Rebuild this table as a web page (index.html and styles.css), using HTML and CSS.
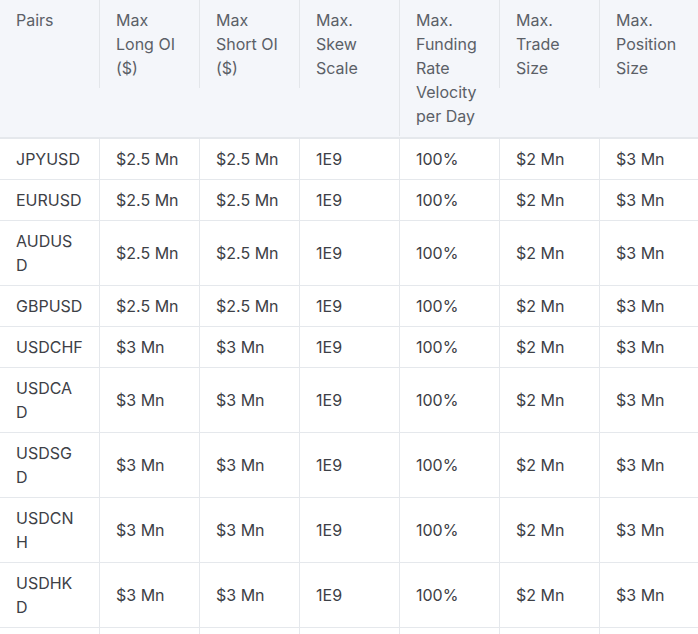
FILE: index.html
```html
<!DOCTYPE html>
<html>
<head>
<meta charset="utf-8">
<link rel="stylesheet" href="styles.css">
</head>
<body>
<div class="wrap">
<table class="tbl">
<thead>
<tr>
<th><div class="hc">Pairs</div></th>
<th><div class="hc">Max Long OI ($)</div></th>
<th><div class="hc">Max Short OI ($)</div></th>
<th><div class="hc">Max. Skew Scale</div></th>
<th><div class="hc">Max. Funding Rate Velocity per Day</div></th>
<th><div class="hc">Max. Trade Size</div></th>
<th><div class="hc">Max. Position Size</div></th>
</tr>
</thead>
<tbody>
<tr><td>JPYUSD</td><td>$2.5 Mn</td><td>$2.5 Mn</td><td>1E9</td><td>100%</td><td>$2 Mn</td><td>$3 Mn</td></tr>
<tr><td>EURUSD</td><td>$2.5 Mn</td><td>$2.5 Mn</td><td>1E9</td><td>100%</td><td>$2 Mn</td><td>$3 Mn</td></tr>
<tr><td>AUDUSD</td><td>$2.5 Mn</td><td>$2.5 Mn</td><td>1E9</td><td>100%</td><td>$2 Mn</td><td>$3 Mn</td></tr>
<tr><td>GBPUSD</td><td>$2.5 Mn</td><td>$2.5 Mn</td><td>1E9</td><td>100%</td><td>$2 Mn</td><td>$3 Mn</td></tr>
<tr><td>USDCHF</td><td>$3 Mn</td><td>$3 Mn</td><td>1E9</td><td>100%</td><td>$2 Mn</td><td>$3 Mn</td></tr>
<tr><td>USDCAD</td><td>$3 Mn</td><td>$3 Mn</td><td>1E9</td><td>100%</td><td>$2 Mn</td><td>$3 Mn</td></tr>
<tr><td>USDSGD</td><td>$3 Mn</td><td>$3 Mn</td><td>1E9</td><td>100%</td><td>$2 Mn</td><td>$3 Mn</td></tr>
<tr><td>USDCNH</td><td>$3 Mn</td><td>$3 Mn</td><td>1E9</td><td>100%</td><td>$2 Mn</td><td>$3 Mn</td></tr>
<tr><td>USDHKD</td><td>$3 Mn</td><td>$3 Mn</td><td>1E9</td><td>100%</td><td>$2 Mn</td><td>$3 Mn</td></tr>
<tr class="tail"><td></td><td></td><td></td><td></td><td></td><td></td><td></td></tr>
</tbody>
</table>
</div>
</body>
</html>
```
FILE: styles.css
```css
html, body {
  margin: 0;
  padding: 0;
  background: #ffffff;
}
.wrap {
  width: 698px;
  height: 634px;
  overflow: hidden;
}
.tbl {
  border-collapse: separate;
  border-spacing: 0;
  table-layout: fixed;
  width: 700px;
  font-family: Inter, "Noto Sans", sans-serif;
  font-size: 16px;
  line-height: 24px;
}
.tbl th {
  width: 100px;
  box-sizing: border-box;
  padding: 0 0 1px 0;
  vertical-align: top;
  text-align: left;
  font-weight: 400;
  color: #5b6067;
  background: #f4f6fa;
  border-bottom: 2px solid #e5e8ec;
}
.tbl th .hc {
  padding: 8px 17px 8px 16px;
  border-left: 1px solid #e3e6ea;
  margin-left: -1px;
  overflow-wrap: anywhere;
}
.tbl th:first-child .hc {
  border-left: none;
  margin-left: 0;
  padding-right: 17px;
}
.tbl td {
  padding: 8px 16px 8px 16px;
  color: #3d4046;
  border-right: 1px solid #e5e8ec;
  border-bottom: 1px solid #e5e8ec;
  vertical-align: middle;
  overflow-wrap: anywhere;
}
.tbl .tail td {
  height: 24px;
}
```
